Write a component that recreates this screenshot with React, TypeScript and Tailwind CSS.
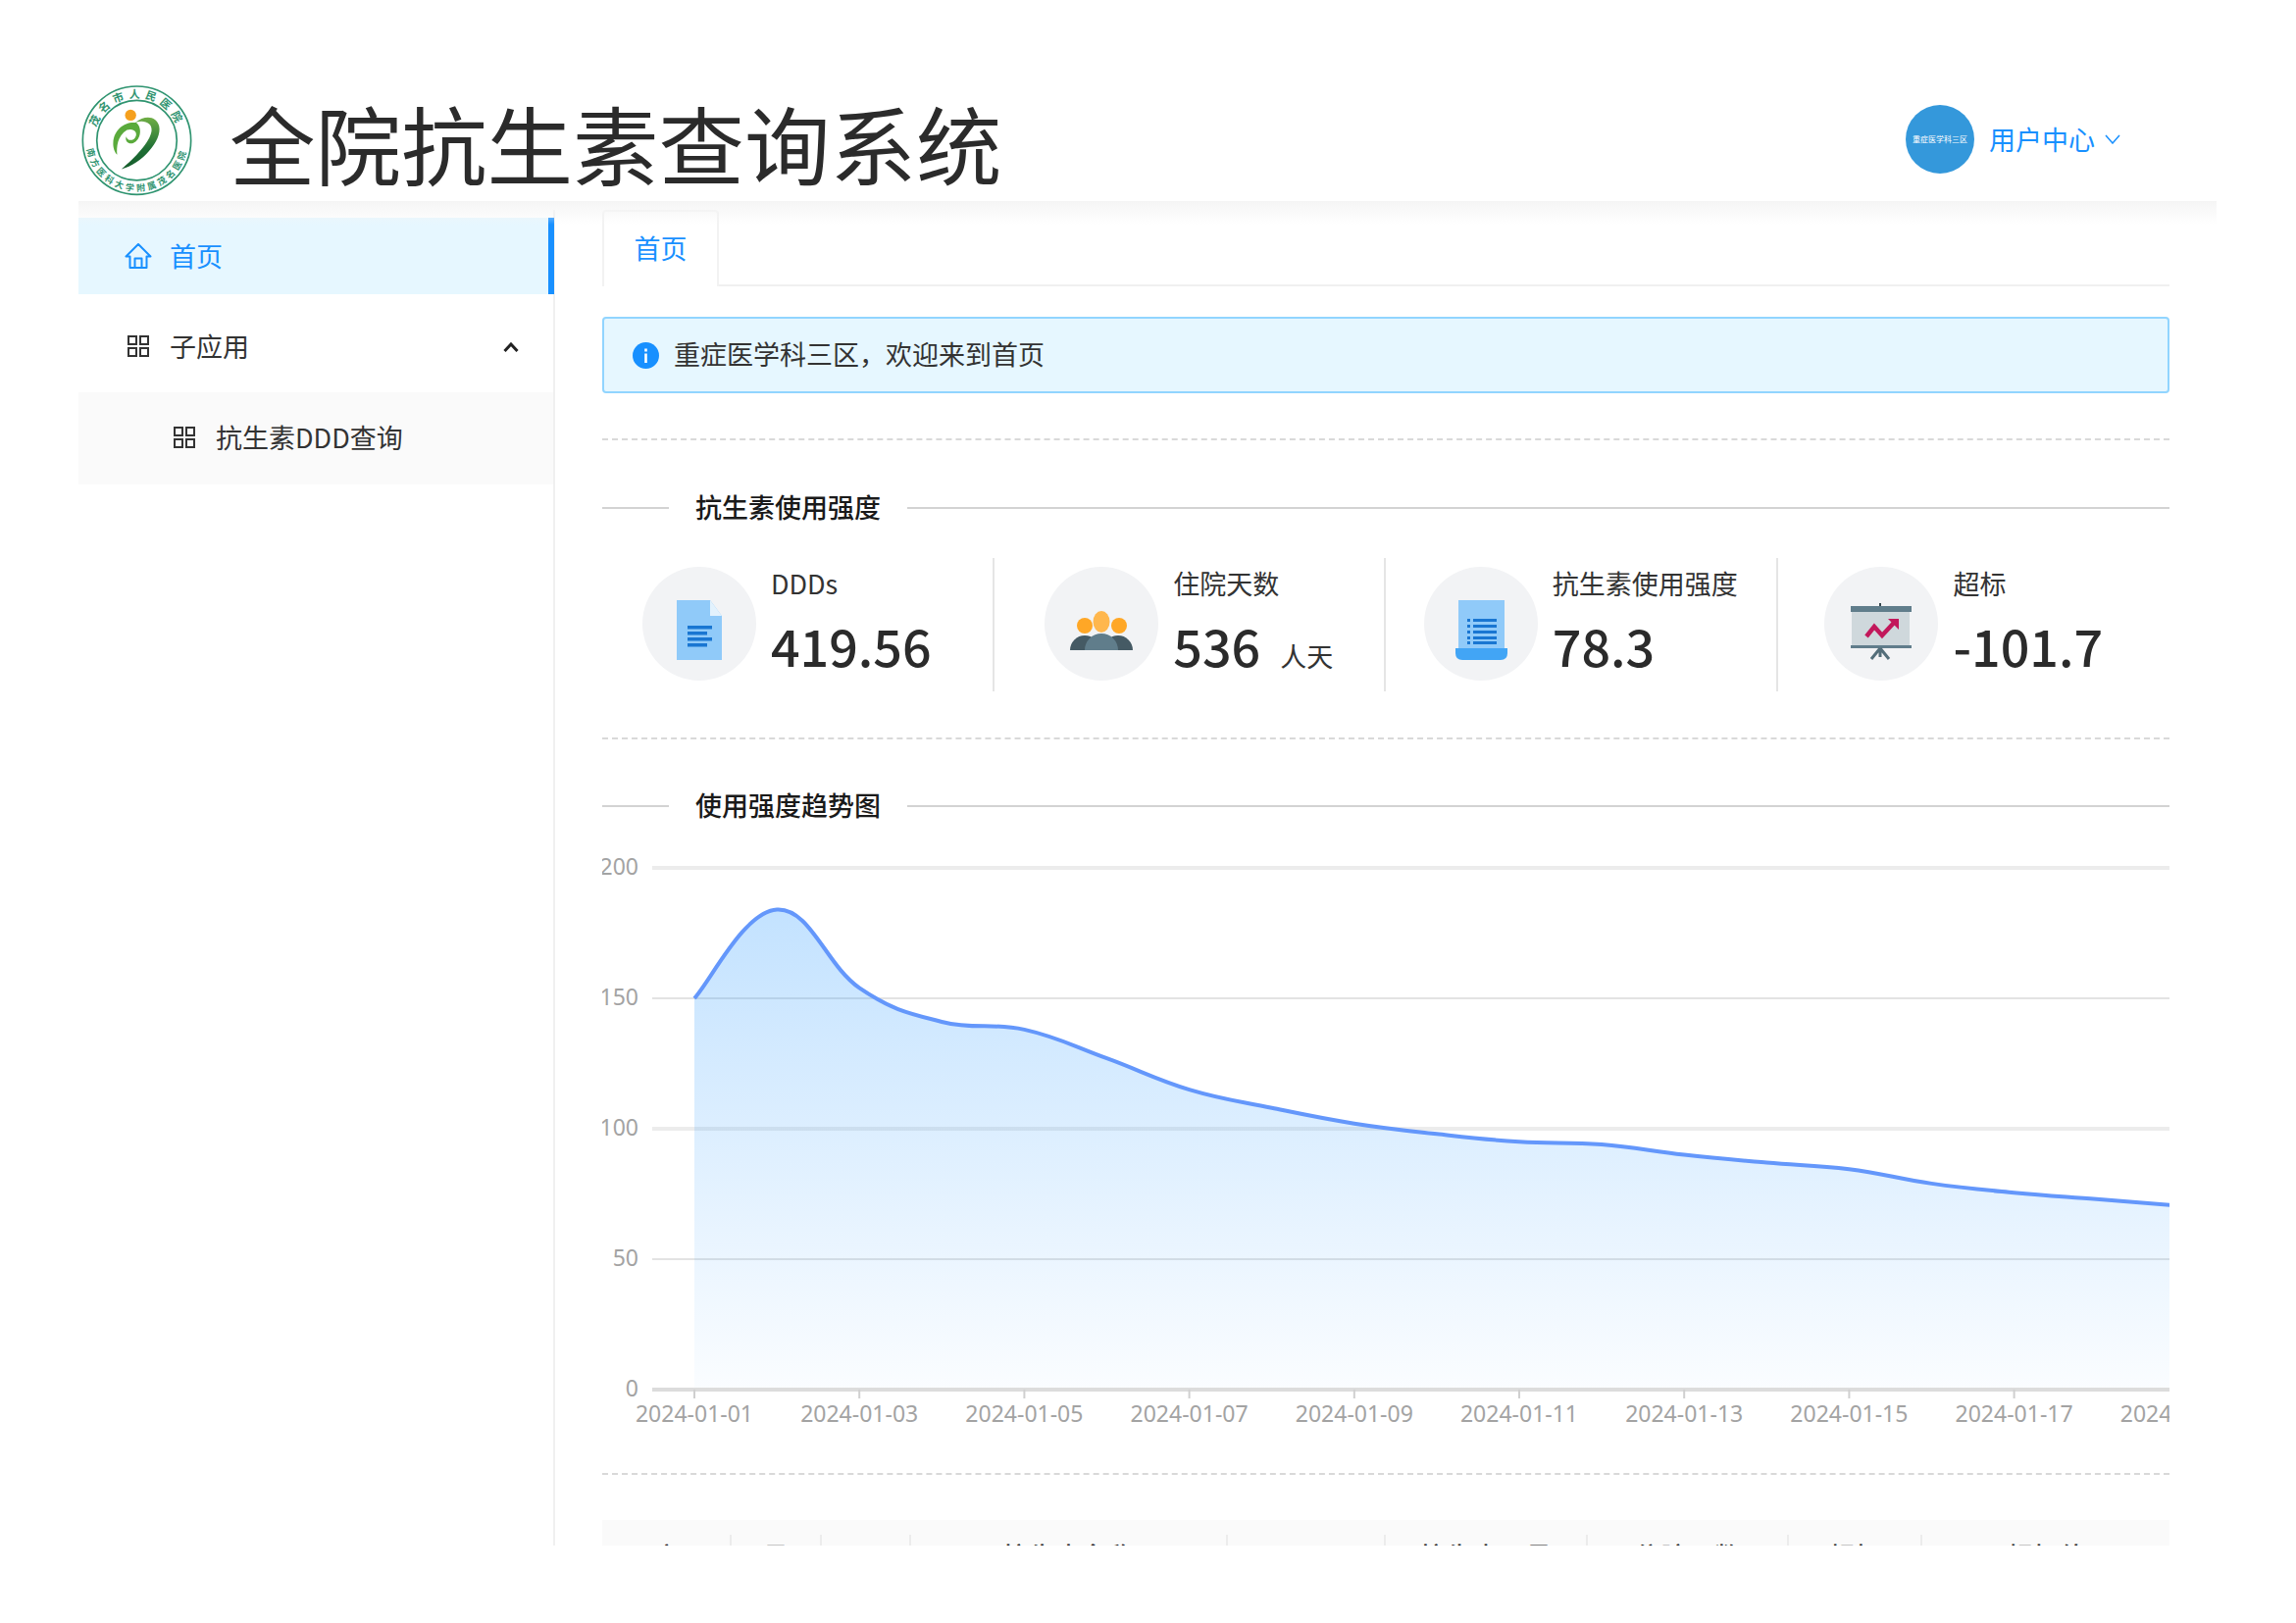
import React from 'react'

const cjk = "font-['Noto_Sans_CJK_SC',sans-serif]"

// trend values per day, read off the picture
const values = [150, 184, 154, 141, 138, 127, 115, 108, 102, 98, 95, 94, 90, 87, 84.5, 79, 75.5, 73, 70.5]
const xOf = (i: number) => 708 + 84.1 * i
const yOf = (v: number) => 1416 - v * 2.66

const buildLine = () => {
  const pts = values.map((v, i) => [xOf(i), yOf(v)])
  let d = `M${pts[0][0]} ${pts[0][1]}`
  for (let i = 0; i < pts.length - 1; i++) {
    const p0 = pts[Math.max(i - 1, 0)]
    const p1 = pts[i]
    const p2 = pts[i + 1]
    const p3 = pts[Math.min(i + 2, pts.length - 1)]
    const k = 0.2
    d += ` C${p1[0] + (p2[0] - p0[0]) * k} ${p1[1] + (p2[1] - p0[1]) * k} ${p2[0] - (p3[0] - p1[0]) * k} ${p2[1] - (p3[1] - p1[1]) * k} ${p2[0]} ${p2[1]}`
  }
  return d
}
const linePath = buildLine()
const areaPath = `${linePath} L${xOf(values.length - 1)} 1416 L708 1416 Z`

const dates = ['01', '03', '05', '07', '09', '11', '13', '15', '17', '19']

function Logo() {
  return (
    <svg width="117" height="117" viewBox="35 30 350 350" className="flex-none">
      <defs>
        <path id="arcTop" d="M80 204 A130 130 0 0 1 340 204" />
        <path id="arcBottom" d="M55 204 A155 155 0 0 0 365 204" />
        <linearGradient id="swoosh" x1="0" y1="0" x2="0" y2="1">
          <stop offset="0" stopColor="#6fae45" />
          <stop offset="0.6" stopColor="#1f6f35" />
          <stop offset="1" stopColor="#155c2c" />
        </linearGradient>
      </defs>
      <circle cx="210" cy="204" r="165" fill="#fff" stroke="#2f9470" strokeWidth="5" />
      <circle cx="210" cy="204" r="122" fill="#fff" stroke="#2f9470" strokeWidth="5" />
      <text fontSize="33" fontWeight="700" fill="#2f9470" letterSpacing="14" textAnchor="middle" fontFamily="Noto Sans CJK SC, sans-serif">
        <textPath href="#arcTop" startOffset="50%">茂名市人民医院</textPath>
      </text>
      <text fontSize="27" fontWeight="700" fill="#2f9470" letterSpacing="9" textAnchor="middle" fontFamily="Noto Sans CJK SC, sans-serif">
        <textPath href="#arcBottom" startOffset="50%">南方医科大学附属茂名医院</textPath>
      </text>
      <circle cx="191" cy="127" r="17" fill="#f5a01e" />
      <path d="M205 150 C235 125 270 130 278 160 C288 205 225 275 163 292 C205 255 250 210 255 175 C258 150 230 140 205 150 Z" fill="url(#swoosh)" />
      <path d="M208 150 C175 145 140 170 138 210 C137 225 142 240 150 248 C148 225 150 190 180 172 C200 165 215 180 205 195 C198 207 180 205 178 192 C172 205 185 218 200 212 C222 203 228 165 208 150 Z" fill="#5aaa3c" />
    </svg>
  )
}

function HomeIcon() {
  return (
    <svg width="28" height="26" viewBox="0 0 28 26" fill="none" stroke="#1890ff" strokeWidth="2" strokeLinejoin="round">
      <path d="M14 1 L1.5 13.5 H5.5 V25 H22.5 V13.5 H26.5 Z" />
      <path d="M10.5 25 V15.5 H17.5 V25" />
    </svg>
  )
}

function GridIcon() {
  return (
    <svg width="24" height="24" viewBox="0 0 24 24" fill="none" stroke="#333" strokeWidth="2">
      <rect x="2" y="2" width="8" height="8" />
      <rect x="14" y="2" width="8" height="8" />
      <rect x="2" y="14" width="8" height="8" />
      <rect x="14" y="14" width="8" height="8" />
    </svg>
  )
}

function SectionTitle({ title }: { title: string }) {
  return (
    <div className="flex items-center h-10">
      <div className="w-[68px] h-[2px] bg-[#d3d3d3]" />
      <span className="px-[27px] pb-[3px] text-[27px] leading-10 font-medium text-[#1a1a1a]">{title}</span>
      <div className="flex-1 h-[2px] bg-[#d3d3d3]" />
    </div>
  )
}

function DocIcon() {
  return (
    <svg width="116" height="116" viewBox="0 0 116 116">
      <path d="M35 34 H69 L81 50 V95 H35 Z" fill="#90caf9" />
      <path d="M69 34 L81 50 H69 Z" fill="#e3f2fd" />
      <rect x="46" y="60" width="25" height="3.5" fill="#1976d2" />
      <rect x="46" y="66" width="20" height="3.5" fill="#1976d2" />
      <rect x="46" y="72" width="25" height="3.5" fill="#1976d2" />
      <rect x="46" y="78" width="20" height="3.5" fill="#1976d2" />
    </svg>
  )
}

function PeopleIcon() {
  return (
    <svg width="116" height="116" viewBox="0 0 116 116">
      <ellipse cx="41" cy="60" rx="8" ry="8" fill="#ffa726" />
      <ellipse cx="76" cy="60" rx="8" ry="8" fill="#ffa726" />
      <ellipse cx="58" cy="56" rx="8.5" ry="11" fill="#ffb74d" />
      <path d="M26 85 A15 15 0 0 1 56 85 Z" fill="#455a64" />
      <path d="M60 85 A15 15 0 0 1 90 85 Z" fill="#455a64" />
      <path d="M41 85 A17 17 0 0 1 75 85 Z" fill="#607d8b" />
    </svg>
  )
}

function ListIcon() {
  return (
    <svg width="116" height="116" viewBox="0 0 116 116">
      <rect x="35" y="34" width="47" height="50" fill="#90caf9" />
      <path d="M32 83 H85 V88 Q85 95 78 95 H39 Q32 95 32 88 Z" fill="#42a5f5" />
      {[53, 59, 65, 71, 76].map((y) => (
        <g key={y} fill="#1976d2">
          <rect x="44" y={y} width="3" height="3" />
          <rect x="50" y={y} width="24" height="3" />
        </g>
      ))}
    </svg>
  )
}

function BoardIcon() {
  return (
    <svg width="116" height="116" viewBox="0 0 116 116">
      <rect x="56" y="37" width="2" height="4" fill="#37474f" />
      <rect x="28" y="46" width="59" height="34" fill="#cfd8dc" />
      <rect x="27" y="40" width="62" height="6" fill="#607d8b" />
      <rect x="27" y="80" width="62" height="3" fill="#607d8b" />
      <path d="M57 83 L48 94 M57 83 L66 94 M57 83 V92" stroke="#546e7a" strokeWidth="3" fill="none" />
      <polyline points="43,71 51,61 59,70 71,57" fill="none" stroke="#c2185b" strokeWidth="4.5" />
      <polygon points="65,53 76,53 76,64" fill="#c2185b" />
    </svg>
  )
}

const stats = [
  { label: 'DDDs', value: '419.56', unit: '', icon: <DocIcon />, cls: 'pr-[21px] border-r-2' },
  { label: '住院天数', value: '536', unit: '人天', icon: <PeopleIcon />, cls: 'border-r-2' },
  { label: '抗生素使用强度', value: '78.3', unit: '', icon: <ListIcon />, cls: 'border-r-2' },
  { label: '超标', value: '-101.7', unit: '', icon: <BoardIcon />, cls: 'pr-[20px]' },
]

const tableHeads = [
  { title: '序', cls: 'w-[130px]' },
  { title: '号', cls: 'w-[92px] border-l-2' },
  { title: '', cls: 'w-[91px] border-l-2' },
  { title: '抗生素名称', cls: 'w-[323px] border-l-2' },
  { title: '', cls: 'w-[161px] border-l-2' },
  { title: '抗生素用量', cls: 'w-[206px] border-l-2' },
  { title: '住院天数', cls: 'w-[205px] border-l-2' },
  { title: '超标', cls: 'w-[136px] border-l-2' },
  { title: '超标值', cls: 'w-[254px] border-l-2' },
]

function TrendChart() {
  return (
    <svg width="1598" height="620" viewBox="614 860 1598 620" className="block mt-[19px]">
      <defs>
        <linearGradient id="area" x1="0" y1="925" x2="0" y2="1416" gradientUnits="userSpaceOnUse">
          <stop offset="0" stopColor="#1890ff" stopOpacity="0.26" />
          <stop offset="1" stopColor="#1890ff" stopOpacity="0.02" />
        </linearGradient>
      </defs>
      {[200, 150, 100, 50].map((v) => (
        <line key={v} x1="665" x2="2212" y1={yOf(v)} y2={yOf(v)} stroke={v % 100 === 0 ? '#ececec' : '#e3e3e3'} strokeWidth={v % 100 === 0 ? 4 : 2} />
      ))}
      <path d={areaPath} fill="url(#area)" />
      <path d={linePath} fill="none" stroke="#6497fb" strokeWidth="4" />
      <line x1="665" x2="2212" y1="1416" y2="1416" stroke="#dcdcdc" strokeWidth="4" />
      {[200, 150, 100, 50, 0].map((v) => (
        <text key={v} x="651" y={yOf(v) + 7} textAnchor="end" fontSize="23" fill="#a3a3a3" fontFamily="Noto Sans, sans-serif">{v}</text>
      ))}
      {dates.map((d, i) => (
        <g key={d}>
          <line x1={xOf(i * 2)} x2={xOf(i * 2)} y1="1416" y2="1425" stroke="#d0d0d0" strokeWidth="2" />
          <text x={xOf(i * 2)} y="1449" textAnchor="middle" fontSize="23" fill="#a3a3a3" fontFamily="Noto Sans, sans-serif">{`2024-01-${d}`}</text>
        </g>
      ))}
    </svg>
  )
}

export default function App() {
  return (
    <div className={`w-[2341px] h-[1655px] bg-white text-[#333] ${cjk}`}>
      <div className="ml-[80px] w-[2180px] h-[1576px] overflow-hidden flex flex-col">
        {/* Header */}
        <header className="h-[205px] flex-none flex items-start pt-[85px]">
          <div className="ml-[1px]"><Logo /></div>
          <h1 className="ml-[36px] mt-[16px] text-[87.5px] leading-[88px] font-normal text-[#2b2b2b] whitespace-nowrap">全院抗生素查询系统</h1>
          <div className="ml-auto mr-[98px] mt-[22px] flex items-center">
            <div className="w-[70px] h-[70px] rounded-full bg-[#3498db] text-white text-[8px] flex items-center justify-center whitespace-nowrap">重症医学科三区</div>
            <span className="ml-[15px] text-[27px] leading-[36px] text-[#1890ff]">用户中心</span>
            <svg width="16" height="10" viewBox="0 0 16 10" className="ml-[10px]" fill="none" stroke="#1890ff" strokeWidth="1.5">
              <path d="M1 1 L8 9 L15 1" />
            </svg>
          </div>
        </header>

        <div className="flex-1 flex relative min-h-0">
          {/* shadow under the header */}
          <div className="absolute left-0 right-0 top-0 h-[24px] bg-gradient-to-b from-[#f5f5f5] to-transparent pointer-events-none" />

          {/* Sidebar */}
          <aside className="w-[486px] flex-none mt-[9px] pt-[8px] border-r-2 border-[#f0f0f0] text-[27px]">
            <div className="h-[78px] -mr-[1px] bg-[#e6f7ff] border-r-[6px] border-[#1890ff] flex items-center pl-[47px] text-[#1890ff]">
              <span className="w-[28px] flex justify-center"><HomeIcon /></span>
              <span className="ml-[18px]">首页</span>
            </div>
            <div className="h-[100px] pt-[6px] flex items-center pl-[47px]">
              <span className="w-[28px] flex justify-center"><GridIcon /></span>
              <span className="ml-[18px]">子应用</span>
              <svg width="16" height="10" viewBox="0 0 16 10" className="ml-auto mr-[35px] mt-[2px]" fill="none" stroke="#222" strokeWidth="3">
                <path d="M1.5 9 L8 2 L14.5 9" />
              </svg>
            </div>
            <div className="h-[94px] pb-[2px] bg-[#fafafa] flex items-center pl-[94px]">
              <span className="w-[27px] flex justify-center"><GridIcon /></span>
              <span className="ml-[19px]">抗生素DDD查询</span>
            </div>
          </aside>

          {/* Content */}
          <main className="flex-1 min-w-0 pl-[48px] pr-[48px]">
            <div className="mt-[9px] border-b-2 border-[#f0f0f0] flex">
              <div className="w-[119px] h-[78px] -mb-[2px] pb-[2px] border-2 border-b-0 border-[#f2f2f2] rounded-t-[4px] bg-white flex items-center justify-center text-[27px] text-[#1890ff]">首页</div>
            </div>

            <div className="mt-[31px] h-[78px] border-2 border-[#91d5ff] rounded-[4px] bg-[#e6f7ff] flex items-center pl-[29px] text-[27px]">
              <svg width="27" height="27" viewBox="0 0 27 27">
                <circle cx="13.5" cy="13.5" r="13.5" fill="#1890ff" />
                <rect x="12.2" y="6.5" width="2.6" height="3" fill="#fff" />
                <rect x="12.2" y="11.5" width="2.6" height="9.5" fill="#fff" />
              </svg>
              <span className="ml-[15px] pb-[2px]">重症医学科三区，欢迎来到首页</span>
            </div>

            <div className="mt-[46px] border-t-2 border-dashed border-[#d9d9d9]" />
            <div className="mt-[49px]"><SectionTitle title="抗生素使用强度" /></div>

            <div className="mt-[31px] grid grid-cols-4 h-[136px]">
              {stats.map((s) => (
                <div key={s.label} className={`${s.cls} border-[#e5e5e5] flex justify-center items-start`}>
                  <div className="mt-[9px] w-[116px] h-[116px] rounded-full bg-[#f2f3f5] flex-none">{s.icon}</div>
                  <div className="ml-[15px] mt-[8px]">
                    <div className="text-[27px] leading-[36px] whitespace-nowrap">{s.label}</div>
                    <div className="mt-[13px] flex items-baseline whitespace-nowrap">
                      <span className="text-[52px] leading-[64px] font-medium text-[#2b2b2b]">{s.value}</span>
                      {s.unit && <span className="ml-[20px] text-[27px]">{s.unit}</span>}
                    </div>
                  </div>
                </div>
              ))}
            </div>

            <div className="mt-[47px] border-t-2 border-dashed border-[#d9d9d9]" />
            <div className="mt-[48px]"><SectionTitle title="使用强度趋势图" /></div>

            <TrendChart />

            <div className="mt-[21px] border-t-2 border-dashed border-[#d9d9d9]" />

            <div className="mt-[46px] h-[90px] bg-[#fafafa] flex items-start">
              {tableHeads.map((h, i) => (
                <div key={i} className={`${h.cls} flex-none mt-[15px] h-[60px] pt-[5px] border-[#ececec] text-center text-[27px] leading-[33px] font-medium text-[#222]`}>{h.title}</div>
              ))}
            </div>
          </main>
        </div>
      </div>
    </div>
  )
}
